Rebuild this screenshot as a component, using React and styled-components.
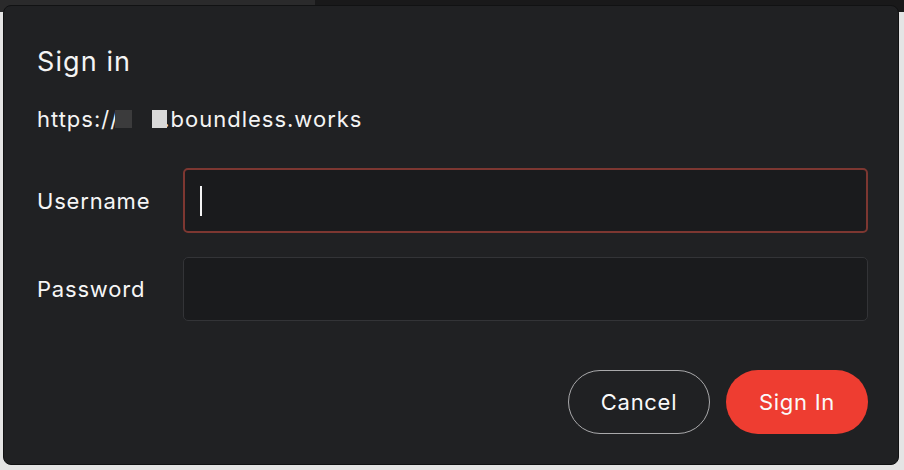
import React from "react";
import styled, { createGlobalStyle } from "styled-components";

const GlobalStyle = createGlobalStyle`
  html, body {
    margin: 0;
    padding: 0;
    background: #e4e4e4;
    font-family: Inter, "Noto Sans", "Liberation Sans", sans-serif;
    -webkit-font-smoothing: antialiased;
  }
`;

function App() {
  return (
    <>
      <GlobalStyle />
      <Page>
        <TopStrip>
          <StripLeft />
          <StripRight />
        </TopStrip>
        <Dialog>
          <Title>Sign in</Title>
          <Origin>
            https://
            <Redact $tone="dark" />
            <Redact $tone="light" />
            .boundless.works
          </Origin>
          <Form>
            <Label>Username</Label>
            <Field $focused>
              <Caret />
            </Field>
            <Label>Password</Label>
            <Field />
          </Form>
          <Actions>
            <Button>Cancel</Button>
            <Button $primary>Sign In</Button>
          </Actions>
        </Dialog>
      </Page>
    </>
  );
}

export default App;

const Page = styled.div`
  width: 904px;
  height: 470px;
  overflow: hidden;
  display: flex;
  flex-direction: column;
`;

const TopStrip = styled.div`
  display: flex;
  height: 12px;
  margin-bottom: -7px;
`;
const StripLeft = styled.div`
  width: 315px;
  background: #2a2a2b;
`;
const StripRight = styled.div`
  flex: 1;
  background: #19191a;
`;

const Dialog = styled.div`
  position: relative;
  margin-left: 3px;
  width: 896px;
  height: 460px;
  box-sizing: border-box;
  background: #202123;
  border: 1px solid #111213;
  border-radius: 8px;
  padding: 36px 30px 0 33px;
  color: #f4f4f4;
  display: flex;
  flex-direction: column;
`;

const Title = styled.div`
  font-size: 27px;
  line-height: 40px;
  font-weight: 400;
  letter-spacing: 1.1px;
`;

const Origin = styled.div`
  margin-top: 23px;
  font-size: 22px;
  line-height: 28px;
  letter-spacing: 1px;
  display: flex;
  align-items: center;
`;

const Redact = styled.span`
  display: inline-block;
  width: ${(p) => (p.$tone === "dark" ? "17px" : "15px")};
  height: 18px;
  margin-left: ${(p) => (p.$tone === "dark" ? "-4px" : "20px")};
  margin-right: ${(p) => (p.$tone === "dark" ? "0" : "-4px")};
  background: ${(p) => (p.$tone === "dark" ? "#3b3b3c" : "#d9d9d9")};
  position: relative;
`;

const Form = styled.div`
  margin-top: 35px;
  display: grid;
  grid-template-columns: 146px 1fr;
  row-gap: 24px;
  align-items: center;
`;

const Label = styled.div`
  font-size: 22px;
  letter-spacing: 0.8px;
  color: #f6f6f6;
`;

const Field = styled.div`
  height: ${(p) => (p.$focused ? "65px" : "64px")};
  box-sizing: border-box;
  background: #1a1b1d;
  border-radius: 5px;
  border: ${(p) => (p.$focused ? "2px solid #7d3731" : "1px solid #333437")};
  display: flex;
  align-items: center;
  padding-left: 15px;
`;

const Caret = styled.span`
  width: 2px;
  height: 30px;
  background: #f4f4f4;
`;

const Actions = styled.div`
  margin-top: 49px;
  display: flex;
  justify-content: flex-end;
  gap: 16px;
`;

const Button = styled.button`
  width: 142px;
  height: 64px;
  border-radius: 32px;
  font-family: inherit;
  font-size: 22px;
  letter-spacing: 0.7px;
  color: #fafafa;
  background: ${(p) => (p.$primary ? "#ee3d31" : "transparent")};
  border: ${(p) => (p.$primary ? "none" : "1px solid #a9a9ab")};
  cursor: pointer;
`;
